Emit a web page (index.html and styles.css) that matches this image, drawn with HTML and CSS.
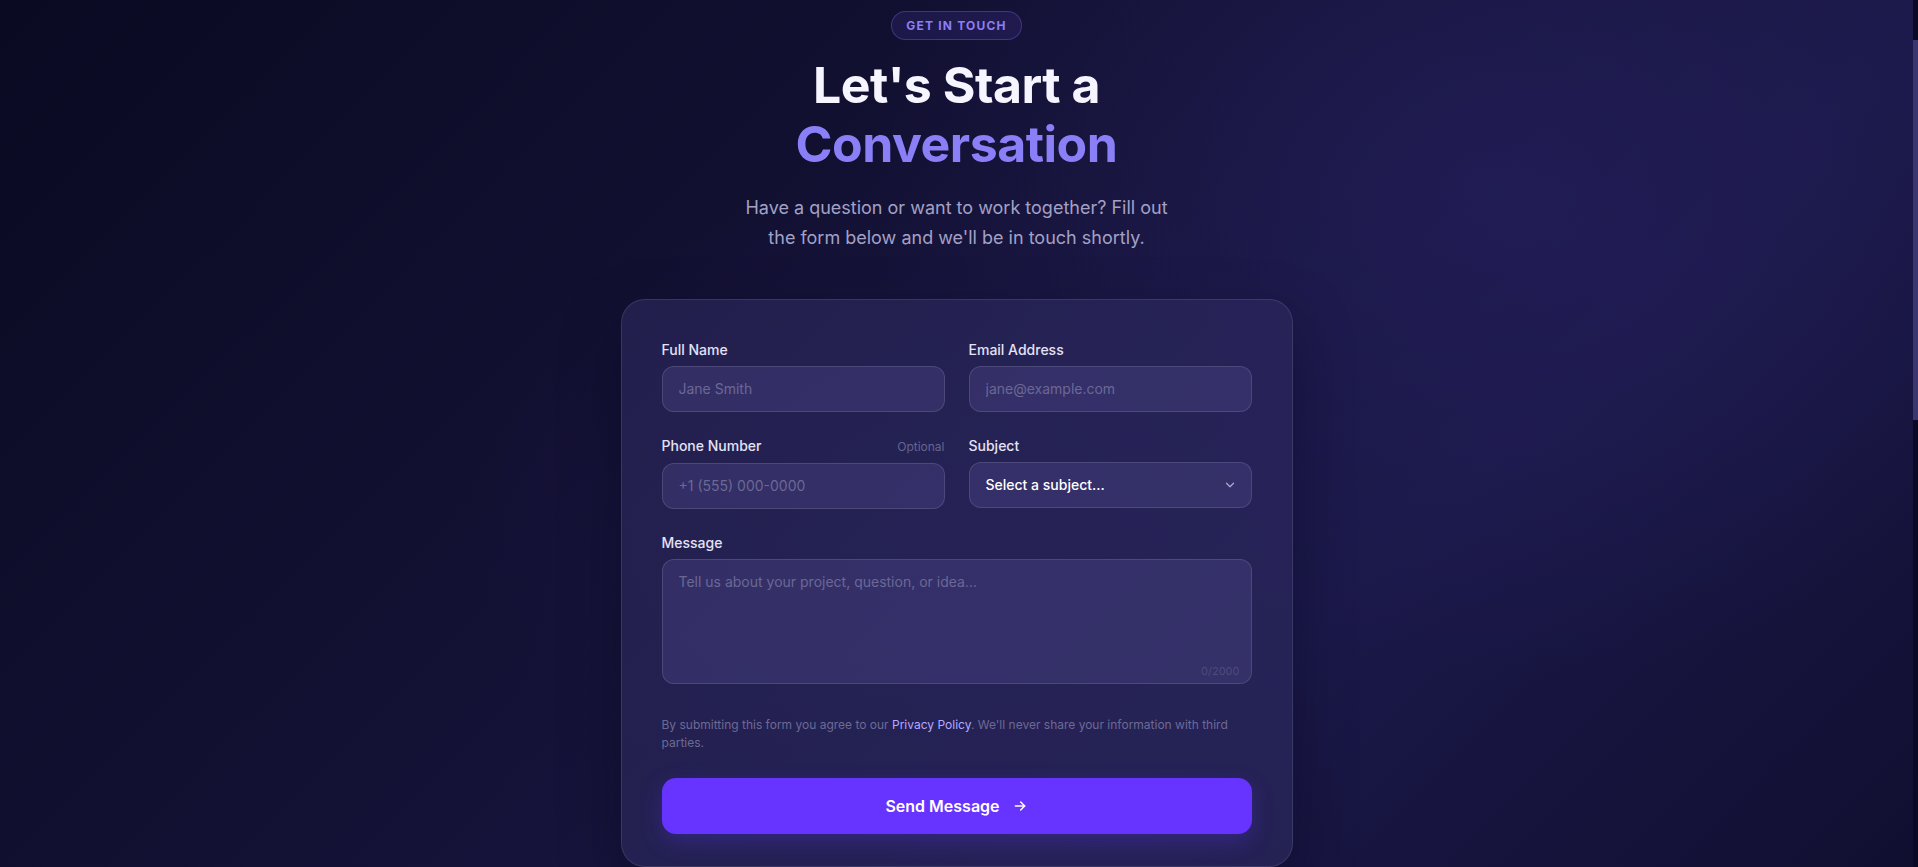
FILE: index.html
```html
<!DOCTYPE html>
<html>
<head>
  <title>Contact - Let's Start a Conversation</title>
  <link rel="stylesheet" href="styles.css">
</head>
<body>
  <main class="contact">
    <span class="badge">Get in touch</span>
    <h1 class="title">Let's Start a<br><span class="accent">Conversation</span></h1>
    <p class="lead">Have a question or want to work together? Fill out the form below and we'll be in touch shortly.</p>

    <form class="card">
      <div class="row">
        <div class="field">
          <label class="label" for="name">Full Name</label>
          <input class="input" id="name" type="text" placeholder="Jane Smith">
        </div>
        <div class="field">
          <label class="label" for="email">Email Address</label>
          <input class="input" id="email" type="email" placeholder="jane@example.com">
        </div>
      </div>

      <div class="row">
        <div class="field">
          <label class="label" for="phone">Phone Number <span class="optional">Optional</span></label>
          <input class="input" id="phone" type="tel" placeholder="+1 (555) 000-0000">
        </div>
        <div class="field">
          <label class="label" for="subject">Subject</label>
          <div class="select-wrap">
            <select class="input select" id="subject">
              <option>Select a subject...</option>
              <option>General question</option>
              <option>Project enquiry</option>
              <option>Support</option>
            </select>
            <svg class="chevron" width="14" height="14" viewBox="0 0 24 24" fill="none" stroke="currentColor" stroke-width="2.2" stroke-linecap="round" stroke-linejoin="round"><path d="M6 9l6 6 6-6"/></svg>
          </div>
        </div>
      </div>

      <div class="field">
        <label class="label" for="message">Message</label>
        <div class="textarea-wrap">
          <textarea class="input textarea" id="message" placeholder="Tell us about your project, question, or idea..."></textarea>
          <span class="counter">0/2000</span>
        </div>
      </div>

      <p class="note">By submitting this form you agree to our <a href="#">Privacy Policy</a>. We'll never share your information with third parties.</p>

      <button class="submit" type="button">
        Send Message
        <svg width="16" height="16" viewBox="0 0 24 24" fill="none" stroke="currentColor" stroke-width="2.2" stroke-linecap="round" stroke-linejoin="round"><path d="M5 12h14"/><path d="M13 6l6 6-6 6"/></svg>
      </button>
    </form>
  </main>
</body>
</html>
```

FILE: styles.css
```css
* {
  box-sizing: border-box;
}
html {
  background: #0f0e2d;
}
body {
  margin: 0;
  padding-right: 5px;
  min-height: 1960px;
  font-family: Inter, "Noto Sans", sans-serif;
  color: #e6e4f7;
  background:
    radial-gradient(ellipse 900px 700px at 78% 22%, rgba(40, 34, 100, 0.55), transparent 70%),
    radial-gradient(ellipse 700px 500px at 50% 60%, rgba(30, 26, 80, 0.5), transparent 70%),
    linear-gradient(135deg, #0a0a22 0%, #141236 45%, #1a1848 70%, #110f30 100%);
  background-repeat: no-repeat;
  background-size: 100% 867px;
}
/* thin scrollbar strip */
body::after {
  content: "";
  position: fixed;
  top: 0;
  right: 0;
  width: 5px;
  height: 100%;
  background: linear-gradient(#0b0a24 0, #0b0a24 40px, #3a3670 40px, #3a3670 420px, #0b0a24 420px);
}
::-webkit-scrollbar {
  width: 5px;
}
::-webkit-scrollbar-track {
  background: #0b0a24;
}
::-webkit-scrollbar-thumb {
  background: #3a3670;
}

.contact {
  display: flex;
  flex-direction: column;
  align-items: center;
  padding-top: 11px;
}
.badge {
  display: inline-block;
  padding: 6px 14px;
  border: 1px solid rgba(139, 124, 246, 0.3);
  border-radius: 999px;
  background: rgba(99, 80, 220, 0.14);
  color: #8c7ef7;
  font-size: 12px;
  line-height: 15px;
  font-weight: 700;
  letter-spacing: 0.1em;
  text-transform: uppercase;
}
.title {
  margin: 16px 0 0;
  font-size: 50px;
  line-height: 59px;
  font-weight: 700;
  letter-spacing: -0.01em;
  text-align: center;
  color: #f6f5ff;
}
.accent {
  color: #8a7ff6;
}
.lead {
  max-width: 440px;
  margin: 19px 0 0;
  font-size: 18px;
  line-height: 30px;
  text-align: center;
  color: #a3a1c6;
}

.card {
  width: 672px;
  margin-top: 46px;
  padding: 40px 40px 32px;
  border: 1px solid rgba(255, 255, 255, 0.1);
  border-radius: 24px;
  background: rgba(48, 44, 98, 0.55);
  box-shadow: 0 24px 60px rgba(4, 4, 20, 0.35);
  display: flex;
  flex-direction: column;
  gap: 24px;
}
.row {
  display: grid;
  grid-template-columns: 1fr 1fr;
  gap: 24px;
}
.field {
  display: flex;
  flex-direction: column;
  gap: 6px;
}
.label {
  display: flex;
  justify-content: space-between;
  align-items: baseline;
  font-size: 14px;
  line-height: 20px;
  font-weight: 500;
  color: #e4e2f6;
}
.optional {
  font-size: 12px;
  font-weight: 400;
  color: #67648f;
}
.input {
  width: 100%;
  padding: 12px 16px;
  border: 1px solid rgba(255, 255, 255, 0.12);
  border-radius: 12px;
  background: rgba(66, 60, 120, 0.55);
  color: #ffffff;
  font-family: inherit;
  font-size: 14px;
  line-height: 20px;
  outline: none;
}
.input::placeholder {
  color: #6b6896;
}
.select-wrap,
.textarea-wrap {
  position: relative;
}
.select {
  appearance: none;
  -webkit-appearance: none;
  height: 46px;
  font-weight: 500;
  color: #ffffff;
}
.select option {
  background: #221f4a;
}
.chevron {
  position: absolute;
  right: 15px;
  top: 16px;
  color: #aaa7cc;
  pointer-events: none;
}
.textarea {
  display: block;
  height: 125px;
  resize: none;
}
.counter {
  position: absolute;
  right: 12px;
  bottom: 6px;
  font-size: 11px;
  color: #4e4b7c;
}

.note {
  margin: 8px 0 0;
  font-size: 12px;
  line-height: 18px;
  color: #6c6a95;
}
.note a {
  color: #b3a9ff;
  text-decoration: none;
}
.submit {
  display: flex;
  align-items: center;
  justify-content: center;
  gap: 12px;
  height: 56px;
  margin-top: 2px;
  border: none;
  border-radius: 14px;
  background: #6733ff;
  color: #ffffff;
  font-family: inherit;
  font-size: 16px;
  font-weight: 600;
  box-shadow: 0 8px 22px rgba(90, 50, 230, 0.3);
  cursor: pointer;
}
```
